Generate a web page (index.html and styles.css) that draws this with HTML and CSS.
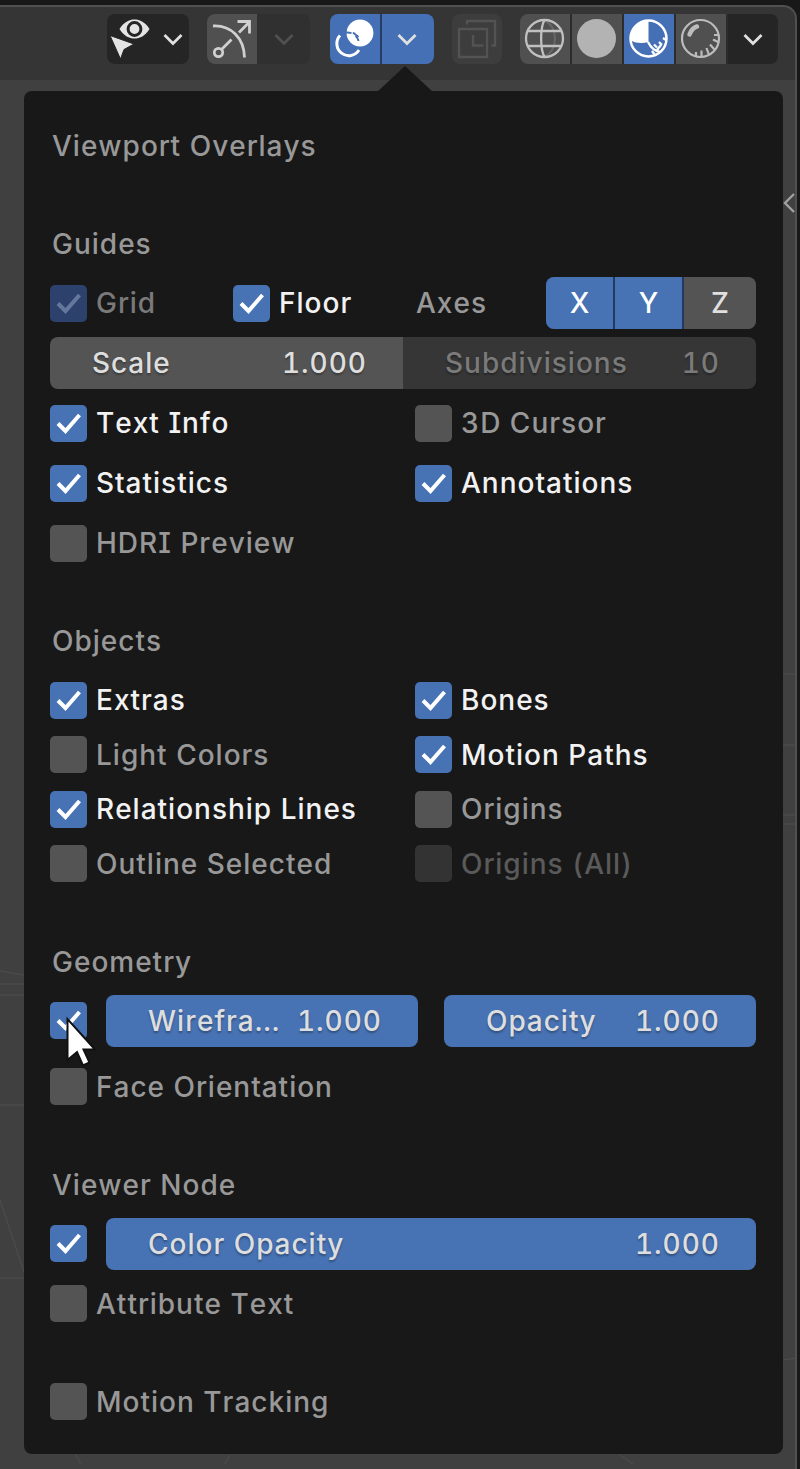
FILE: index.html
```
<!DOCTYPE html>
<html lang="en">
<head>
    <meta charset="UTF-8">
    <meta name="viewport" content="width=device-width, initial-scale=1.0">
    <title>Viewport Overlays</title>
    <link rel="stylesheet" href="styles.css">
</head>
<body>
    <svg class="defs" width="0" height="0">
        <symbol id="tick" viewBox="0 0 37 37"><path d="M8 18.500l7.500 7.500L29.500 10" fill="none" stroke="currentColor" stroke-width="4"/></symbol>
        <symbol id="chevron" viewBox="0 0 24 24"><path d="M3.500 8l8.500 8.500L20.500 8" fill="none" stroke="currentColor" stroke-width="2.800"/></symbol>
    </svg>
    <div class="viewport">
        <!-- Header bar -->
        <header class="toolbar">
            <div class="group dark select">
                <button class="tool"><svg width="44" height="46" viewBox="0 0 44 46">
                    <path d="M9.500 13C14 6 19 3.500 24.500 3.500S35 6 39.500 13c-4.500 7-9.500 9.500-15 9.500S14 20 9.500 13z" fill="#e4e4e4"/>
                    <circle cx="24.500" cy="13" r="6.400" fill="none" stroke="#252525" stroke-width="3"/>
                    <path d="M0 19.500l24 8.500-10 5.500-3.500 9.500z" fill="#e4e4e4" stroke="#252525" stroke-width="1"/>
                </svg></button>
                <button class="drop"><svg width="24" height="24"><use href="#chevron"/></svg></button>
            </div>
            <div class="group gizmo">
                <button class="tool grey"><svg width="44" height="44" viewBox="0 0 44 44" fill="none" stroke="#d0d0d0" stroke-width="2.800">
                    <path d="M3 9c18-1 31 12 31.500 31.500"/>
                    <circle cx="8.500" cy="35.500" r="4.200"/>
                    <path d="M12 32l9.500-9.500M29 15.500L38.500 6M27.500 4.500h12v12"/>
                </svg></button>
                <button class="drop faded"><svg width="24" height="24"><use href="#chevron"/></svg></button>
            </div>
            <div class="group overlays">
                <button class="tool blue"><svg width="44" height="44" viewBox="0 0 44 44">
                    <circle cx="27" cy="16" r="13.400" fill="#fff"/>
                    <path d="M7 18.500a12 12 0 1 0 19 14.500" fill="none" stroke="#fff" stroke-width="3"/>
                    <path d="M12.500 15.500c8-1 14 5 13.500 13" fill="none" stroke="#4772b3" stroke-width="2" stroke-dasharray="6 5"/>
                    <path d="M20 15.500l5.500 4.500" stroke="#4772b3" stroke-width="2"/>
                </svg></button>
                <button class="drop blue"><svg width="24" height="24"><use href="#chevron"/></svg></button>
            </div>
            <div class="group xray">
                <button class="tool"><svg width="44" height="44" viewBox="0 0 44 44" fill="none" stroke="#535353" stroke-width="2.400">
                    <path d="M4 12h28v28H4zM12 7.500V4h28v24.500h-3.500M18 18v10.500h10.500"/>
                </svg></button>
            </div>
            <div class="group shading">
                <button class="tool grey"><svg width="44" height="44" viewBox="0 0 44 44" fill="none" stroke="#c0c0c0" stroke-width="2.300">
                    <circle cx="21.500" cy="21.500" r="18.500"/>
                    <path d="M21.500 3c-4.500 8-4.500 29 0 37M5 14h33M5 29h33"/>
                    <path d="M21.500 3c14 8 14 29 0 37" opacity=".2"/>
                </svg></button>
                <button class="tool grey"><svg width="44" height="44" viewBox="0 0 44 44"><circle cx="21.500" cy="21.500" r="19.500" fill="#b3b3b3"/></svg></button>
                <button class="tool blue"><svg width="44" height="44" viewBox="0 0 44 44" fill="none" stroke="#fff" stroke-width="2.500">
                    <circle cx="21.500" cy="21.500" r="18"/>
                    <path d="M21.500 3.500V25c-6 1.500-12 1.500-17.500-1.500C3 12 11 3.500 21.500 3.500z" fill="#fff" stroke="none"/>
                    <path d="M21 25c3 6 7 9 12 10M27 27.500l3 3M32 25l3 3M30 33l4-5M25 34l3 4M36 21l3 2" stroke-width="2.300"/>
                </svg></button>
                <button class="tool grey"><svg width="44" height="44" viewBox="0 0 44 44" fill="none" stroke="#bcbcbc" stroke-width="2.200">
                    <circle cx="21.500" cy="21.500" r="18.500"/>
                    <path d="M10.500 17.500c1.500-4 4-7 7.500-8" stroke-width="4.500" stroke-linecap="round"/>
                    <path d="M17 35v4M22.500 33.500V40M27.500 31l2.500 7M31 27.500l4.500 5M34 22.500l5 2.500M35 18h4"/>
                </svg></button>
                <button class="drop dark"><svg width="24" height="24"><use href="#chevron"/></svg></button>
            </div>
        </header>

        <!-- Scene behind the popover -->
        <svg class="floor" width="797" height="1384" viewBox="0 80 797 1384" fill="none" stroke="#4a4a4a" stroke-width="1.500">
            <path d="M0 1200l24 72M0 1278h24M0 971l24 4M0 984h24M0 995h24M0 1105h24M75 1453l8 16M230 1455l-8 14M620 1455l20 14M783 1360l14-2M783 674h14M783 745h14M783 815h14M783 824h14"/>
        </svg>
        <svg class="sidebar-toggle" width="14" height="22" viewBox="0 0 14 22"><path d="M12 2L3 11l9 9" fill="none" stroke="#a0a0a0" stroke-width="2.400"/></svg>

        <!-- Overlays popover -->
        <div class="popover">
            <h1 class="row title">Viewport Overlays</h1>

            <section>
                <h2 class="row title">Guides</h2>
                <div class="rows">
                    <div class="row guides-row">
                        <div class="check on disabled"><i class="box"><svg><use href="#tick"/></svg></i><span>Grid</span></div>
                        <div class="check on"><i class="box"><svg><use href="#tick"/></svg></i><span>Floor</span></div>
                        <span class="axes-label">Axes</span>
                        <div class="axes">
                            <button class="active">X</button>
                            <button class="active">Y</button>
                            <button>Z</button>
                        </div>
                    </div>
                    <div class="row joined">
                        <div class="slider grey"><span>Scale</span><span>1.000</span></div>
                        <div class="slider disabled"><span>Subdivisions</span><span>10</span></div>
                    </div>
                    <div class="row cols">
                        <div class="check on"><i class="box"><svg><use href="#tick"/></svg></i><span>Text Info</span></div>
                        <div class="check"><i class="box"></i><span>3D Cursor</span></div>
                    </div>
                    <div class="row cols">
                        <div class="check on"><i class="box"><svg><use href="#tick"/></svg></i><span>Statistics</span></div>
                        <div class="check on"><i class="box"><svg><use href="#tick"/></svg></i><span>Annotations</span></div>
                    </div>
                    <div class="row cols">
                        <div class="check"><i class="box"></i><span>HDRI Preview</span></div>
                    </div>
                </div>
            </section>

            <section>
                <h2 class="row title">Objects</h2>
                <div class="rows tight">
                    <div class="row cols">
                        <div class="check on"><i class="box"><svg><use href="#tick"/></svg></i><span>Extras</span></div>
                        <div class="check on"><i class="box"><svg><use href="#tick"/></svg></i><span>Bones</span></div>
                    </div>
                    <div class="row cols">
                        <div class="check"><i class="box"></i><span>Light Colors</span></div>
                        <div class="check on"><i class="box"><svg><use href="#tick"/></svg></i><span>Motion Paths</span></div>
                    </div>
                    <div class="row cols">
                        <div class="check on"><i class="box"><svg><use href="#tick"/></svg></i><span>Relationship Lines</span></div>
                        <div class="check"><i class="box"></i><span>Origins</span></div>
                    </div>
                    <div class="row cols">
                        <div class="check"><i class="box"></i><span>Outline Selected</span></div>
                        <div class="check disabled"><i class="box"></i><span>Origins (All)</span></div>
                    </div>
                </div>
            </section>

            <section>
                <h2 class="row title">Geometry</h2>
                <div class="rows loose">
                    <div class="row with-slider">
                        <div class="check on">
                            <i class="box"><svg><use href="#tick"/></svg></i>
                            <svg class="cursor" width="34" height="54" viewBox="0 0 34 54"><path d="M2.500 3v41l9.500-8 6 13.500 6.500-3-6-13h11.500z" fill="#fff" stroke="#111" stroke-width="2"/></svg>
                        </div>
                        <div class="slider blue"><span>Wirefra...</span><span>1.000</span></div>
                        <div class="slider blue second"><span>Opacity</span><span>1.000</span></div>
                    </div>
                    <div class="row cols">
                        <div class="check"><i class="box"></i><span>Face Orientation</span></div>
                    </div>
                </div>
            </section>

            <section>
                <h2 class="row title">Viewer Node</h2>
                <div class="rows">
                    <div class="row with-slider">
                        <div class="check on"><i class="box"><svg><use href="#tick"/></svg></i></div>
                        <div class="slider blue"><span>Color Opacity</span><span>1.000</span></div>
                    </div>
                    <div class="row cols">
                        <div class="check"><i class="box"></i><span>Attribute Text</span></div>
                    </div>
                </div>
            </section>

            <section>
                <div class="row cols">
                    <div class="check"><i class="box"></i><span>Motion Tracking</span></div>
                </div>
            </section>
        </div>
    </div>
</body>
</html>
```
FILE: styles.css
```
* {
    box-sizing: border-box;
}
body {
    margin: 0;
    padding: 5px 3px 0 0;
    background: #181818;
    font-family: Inter, "Liberation Sans", sans-serif;
    font-size: 28px;
    font-weight: 480;
    font-kerning: none;
    letter-spacing: 1px;
    font-feature-settings: "tnum", "cv08";
    color: #989898;
}
button {
    border: 0;
    padding: 0;
    font: inherit;
    font-feature-settings: inherit;
    color: #e0e0e0;
}
.defs {
    position: absolute;
}
.viewport {
    position: relative;
    height: 1464px;
    background: #404040;
    border-top: 2px solid #505050;
    border-right: 2px solid #505050;
    border-top-right-radius: 14px;
    overflow: hidden;
}
/* Header */
.toolbar {
    display: flex;
    height: 73px;
    padding: 7px 0 0 107px;
    background: #353535;
}
.group {
    display: flex;
    height: 50px;
    border-radius: 8px;
    overflow: hidden;
}
.tool,
.drop {
    display: flex;
    align-items: center;
    justify-content: center;
    width: 50px;
    height: 50px;
    background: none;
}
.dark {
    background: #252525;
}
.grey {
    background: #505050;
}
.blue {
    background: #4570b5;
}
.select {
    width: 82px;
    margin-right: 18px;
}
.select .drop {
    width: 32px;
}
.gizmo {
    width: 103px;
    margin-right: 20px;
    background: #303030;
}
.faded {
    flex: 1;
    color: #505050;
}
.overlays {
    gap: 2px;
    width: 104px;
    margin-right: 18px;
    background: #263c62;
}
.overlays .drop {
    flex: 1;
    padding-right: 3px;
}
.xray {
    margin-right: 18px;
    background: #3d3d3d;
}
.shading {
    gap: 2px;
    background: #2c2c2c;
}
/* Scene */
.floor {
    display: block;
}
.sidebar-toggle {
    position: absolute;
    right: -1px;
    top: 185px;
}
/* Popover */
.popover {
    position: absolute;
    left: 24px;
    top: 84px;
    width: 759px;
    height: 1363px;
    padding: 29px 27px 0 26px;
    background: #181818;
    border-radius: 8px;
}
.popover::before {
    content: "";
    position: absolute;
    left: 353px;
    top: -25px;
    width: 56px;
    height: 26px;
    background: #181818;
    clip-path: polygon(50% 0, 100% 100%, 0 100%);
}
section {
    margin-top: 46px;
}
.row {
    display: flex;
    align-items: center;
    height: 52px;
    white-space: nowrap;
}
.title {
    margin: 0;
    padding-left: 2px;
    font-size: 28px;
    font-weight: 480;
}
.rows {
    display: flex;
    flex-direction: column;
    gap: 8px;
    margin-top: 7px;
}
.tight {
    gap: 2.6px;
}
.loose {
    gap: 14px;
}
.cols {
    display: grid;
    grid-template-columns: 365px 1fr;
}
/* Checkboxes */
.check {
    position: relative;
    display: flex;
    align-items: center;
    gap: 9px;
}
.box {
    width: 37px;
    height: 37px;
    background: #545454;
    border-radius: 5px;
}
.box svg {
    display: block;
    width: 37px;
    height: 37px;
}
.on {
    color: #f2f2f2;
}
.on .box {
    background: #4772b3;
    color: #fff;
}
.disabled {
    color: #5a5a5a;
}
.check.disabled .box {
    background: #333;
}
.on.disabled {
    color: #7a7a7a;
}
.check.on.disabled .box {
    background: #2c426c;
    color: #64789c;
}
/* Guides */
.guides-row .check {
    width: 183px;
}
.axes-label {
    width: 130px;
}
.axes {
    display: flex;
    flex: 1;
    gap: 2px;
    background: #223a62;
    border-radius: 8px;
    overflow: hidden;
}
.axes button {
    flex: 1;
    height: 52px;
    background: #545454;
    letter-spacing: 0;
}
.axes .active {
    flex: 0 0 67px;
    background: #4772b3;
    color: #fff;
}
/* Number fields */
.slider {
    display: flex;
    flex: 1;
    align-items: center;
    justify-content: space-between;
    height: 52px;
    padding: 0 36px 0 42px;
    border-radius: 8px;
    color: #dedede;
    text-shadow: 0 2px 2px rgba(0, 0, 0, 0.3);
}
.joined .slider:first-child {
    border-radius: 8px 0 0 8px;
}
.joined .slider:last-child {
    border-radius: 0 8px 8px 0;
}
.slider.grey {
    background: #545454;
}
.slider.blue {
    background: #4772b3;
}
.slider.disabled {
    background: #363636;
    color: #7a7a7a;
}
.with-slider .check {
    width: 56px;
}
.second {
    margin-left: 26px;
}
.cursor {
    position: absolute;
    left: 15px;
    top: 14px;
    z-index: 1;
}
```
